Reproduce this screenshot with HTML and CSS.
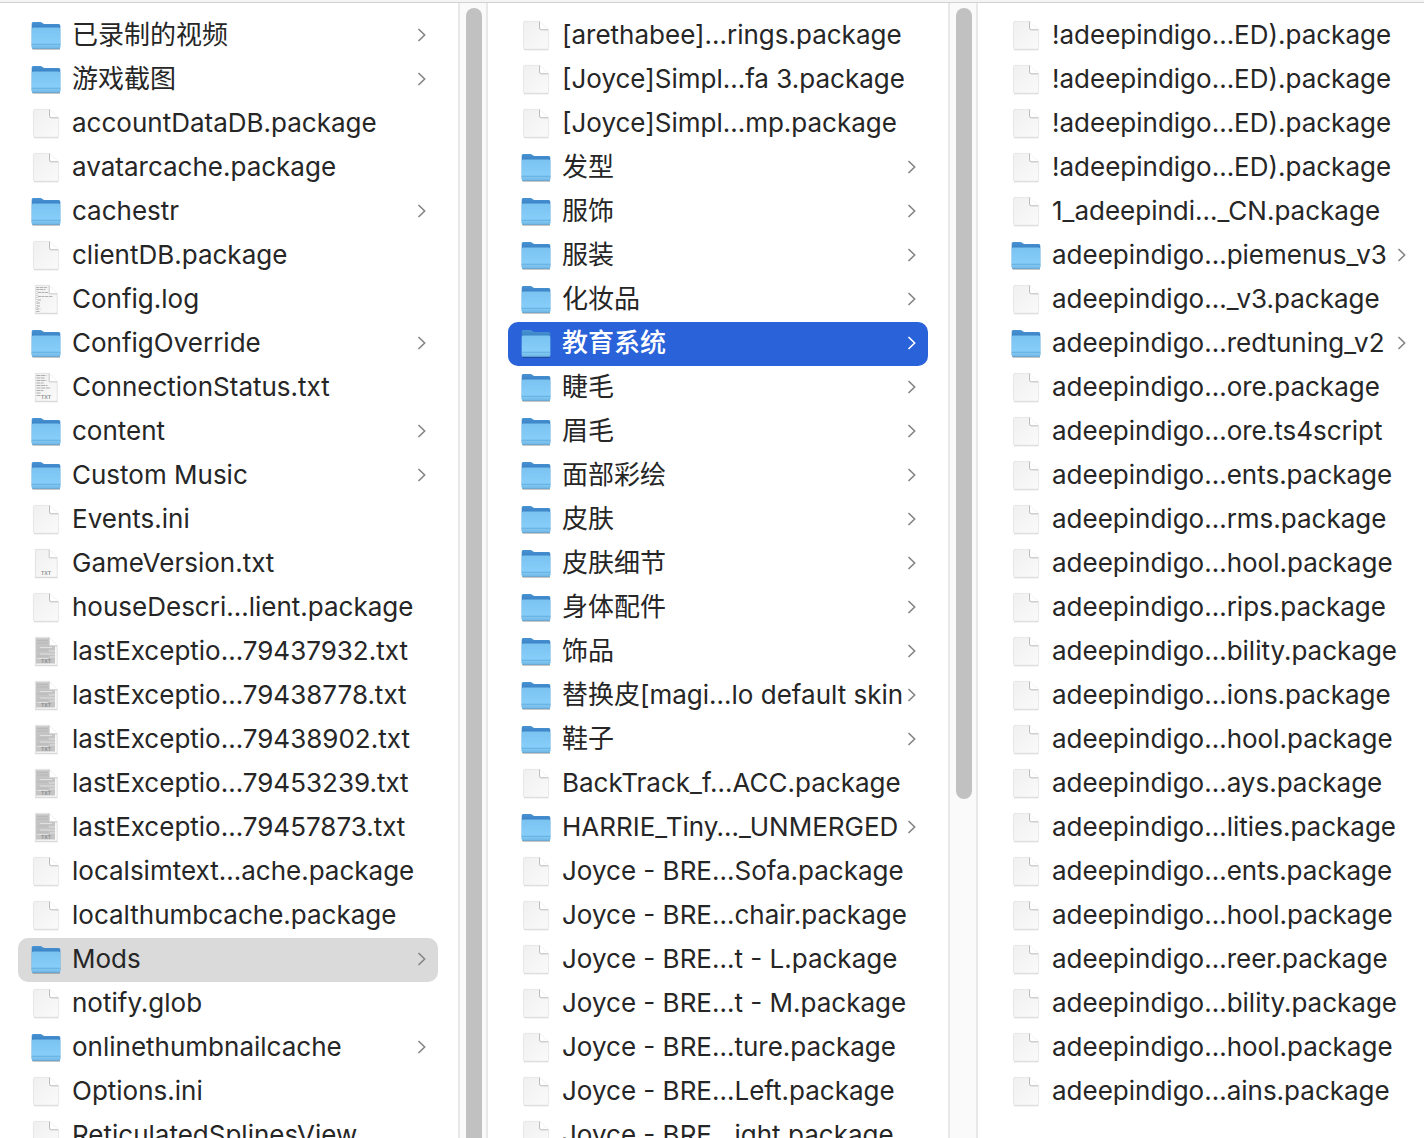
FILE: index.html
```
<!DOCTYPE html>
<html lang="zh-CN">
<head>
  <meta charset="UTF-8">
  <meta name="viewport" content="width=device-width, initial-scale=1.0">
  <title>Mods</title>
  <link rel="stylesheet" href="styles.css">
</head>
<body>
  <!-- icon set -->
  <svg class="sprite" width="0" height="0" aria-hidden="true">
    <defs>
      <linearGradient id="front" x1="0" y1="0" x2="0" y2="1">
        <stop offset="0" stop-color="#7ac2f0"/>
        <stop offset="0.7" stop-color="#86cdf9"/>
        <stop offset="1" stop-color="#74bbe9"/>
      </linearGradient>
      <linearGradient id="back" x1="0" y1="0" x2="0" y2="1">
        <stop offset="0" stop-color="#4893d3"/>
        <stop offset="0.25" stop-color="#3a82c4"/>
        <stop offset="1" stop-color="#3a82c4"/>
      </linearGradient>
      <linearGradient id="paper" x1="0" y1="0" x2="1" y2="1">
        <stop offset="0" stop-color="#f0f0f0"/>
        <stop offset="1" stop-color="#fafafa"/>
      </linearGradient>
    </defs>
    <symbol id="folder" viewBox="0 0 32 32">
      <path d="M2 28.5h28v1.5H3z" fill="#000" opacity=".22"/>
      <path d="M1.700 3.600q0-1.500 1.500-1.500h7.200q1 0 1.700.6l1 .8q.6.4 1.400.4h14.200q1.600 0 1.600 1.600V27H1.700z" fill="url(#back)"/>
      <path d="M1.700 9q0-1.600 1.600-1.600h25.400q1.600 0 1.600 1.600v18.200q0 1.600-1.600 1.600H3.300q-1.600 0-1.600-1.600z" fill="url(#front)"/>
      <path d="M1.700 24.300h28.600" stroke="#5fa9dc" stroke-width=".8"/>
      <path d="M2 28.400h28" stroke="#5d9dca" stroke-width=".8"/>
    </symbol>
    <symbol id="file" viewBox="0 0 32 32">
      <path d="M4 29.700h24.400" stroke="#000" stroke-width="1" opacity=".2"/>
      <path d="M5 1.400h14.600l9 8.600v17.500q0 1.800-1.800 1.800H5.200q-1.800 0-1.800-1.800V3.200q0-1.800 1.800-1.800z" fill="url(#paper)" stroke="#e0e0e0" stroke-width=".7"/>
      <path d="M28.300 9.800L19.500 1.500V8q0 1.800 1.800 1.800z" fill="#fff"/>
      <path d="M19.500 1.500V8q0 1.800 1.800 1.800h7" fill="none" stroke="#b4b4b4" stroke-width=".9"/>
    </symbol>
    <symbol id="sheet" viewBox="0 0 32 32">
      <path d="M5 29.700h22.500" stroke="#000" stroke-width="1" opacity=".2"/>
      <path d="M5.400 1.400h13.800l8 8.600v19.200H5.400z" fill="url(#paper)" stroke="#d8d8d8" stroke-width=".7"/>
      <path d="M19.200 1.500V9.800h8z" fill="#fff"/>
      <path d="M19.200 1.500V9.800h8" fill="none" stroke="#bcbcbc" stroke-width=".8"/>
    </symbol>
    <symbol id="log" viewBox="0 0 32 32">
      <use href="#sheet"/>
      <path d="M6.500 3.500h11M6.500 5.500h9M8 8.500h10M8 12.500h15M8 16h3M7 19h3M7 22h3M6.500 25h4M6.500 27.500h3" stroke="#b0b0b0" stroke-width="1" stroke-dasharray="3 .6"/>
      <path d="M7 3v25" stroke="#b5b5b5" stroke-width="1" stroke-dasharray="1 1"/>
    </symbol>
    <symbol id="txt-log" viewBox="0 0 32 32">
      <use href="#sheet"/>
      <path d="M6.500 3.500h10M6.500 6h8M6.500 8.500h10M6.500 11h7M6.500 13.500h11M6.500 16h14M6.500 18.500h7M6.500 21h4M6.500 23.500h4" stroke="#aeaeae" stroke-width="1" stroke-dasharray="4 .6"/>
      <text x="16" y="27" class="badge">TXT</text>
    </symbol>
    <symbol id="txt" viewBox="0 0 32 32">
      <use href="#sheet"/>
      <text x="16" y="27" class="badge">TXT</text>
    </symbol>
    <symbol id="report" viewBox="0 0 32 32">
      <use href="#sheet"/>
      <path d="M6 2.200h13v7.800h6v17.500H6z" fill="#c4c4c4"/>
      <path d="M10 11.500h12M19 15h6M10 18h15M20 21h5M7 22.500h11" stroke="#e0e0e0" stroke-width="1"/>
      <path d="M7 4.500h11M7 7h11M7 14h11M7 20h11" stroke="#b8b8b8" stroke-width=".8"/>
      <text x="16" y="27" class="badge">TXT</text>
    </symbol>
    <symbol id="arrow" viewBox="0 0 8 14">
      <path d="M1 1.500l5.700 5.500L1 12.500" fill="none" stroke="currentColor" stroke-width="1.700" stroke-linecap="round" stroke-linejoin="round"/>
    </symbol>
  </svg>

  <div class="toolbar-edge"></div>
  <main class="browser">
    <section class="column">
      <ul class="list">
        <li><button class="row"><svg class="icon"><use href="#folder"/></svg><span class="name">已录制的视频</span><svg class="arrow"><use href="#arrow"/></svg></button></li>
        <li><button class="row"><svg class="icon"><use href="#folder"/></svg><span class="name">游戏截图</span><svg class="arrow"><use href="#arrow"/></svg></button></li>
        <li><button class="row"><svg class="icon"><use href="#file"/></svg><span class="name">accountDataDB.package</span></button></li>
        <li><button class="row"><svg class="icon"><use href="#file"/></svg><span class="name">avatarcache.package</span></button></li>
        <li><button class="row"><svg class="icon"><use href="#folder"/></svg><span class="name">cachestr</span><svg class="arrow"><use href="#arrow"/></svg></button></li>
        <li><button class="row"><svg class="icon"><use href="#file"/></svg><span class="name">clientDB.package</span></button></li>
        <li><button class="row"><svg class="icon"><use href="#log"/></svg><span class="name">Config.log</span></button></li>
        <li><button class="row"><svg class="icon"><use href="#folder"/></svg><span class="name">ConfigOverride</span><svg class="arrow"><use href="#arrow"/></svg></button></li>
        <li><button class="row"><svg class="icon"><use href="#txt-log"/></svg><span class="name">ConnectionStatus.txt</span></button></li>
        <li><button class="row"><svg class="icon"><use href="#folder"/></svg><span class="name">content</span><svg class="arrow"><use href="#arrow"/></svg></button></li>
        <li><button class="row"><svg class="icon"><use href="#folder"/></svg><span class="name">Custom Music</span><svg class="arrow"><use href="#arrow"/></svg></button></li>
        <li><button class="row"><svg class="icon"><use href="#file"/></svg><span class="name">Events.ini</span></button></li>
        <li><button class="row"><svg class="icon"><use href="#txt"/></svg><span class="name">GameVersion.txt</span></button></li>
        <li><button class="row"><svg class="icon"><use href="#file"/></svg><span class="name">houseDescri…lient.package</span></button></li>
        <li><button class="row"><svg class="icon"><use href="#report"/></svg><span class="name">lastExceptio…79437932.txt</span></button></li>
        <li><button class="row"><svg class="icon"><use href="#report"/></svg><span class="name">lastExceptio…79438778.txt</span></button></li>
        <li><button class="row"><svg class="icon"><use href="#report"/></svg><span class="name">lastExceptio…79438902.txt</span></button></li>
        <li><button class="row"><svg class="icon"><use href="#report"/></svg><span class="name">lastExceptio…79453239.txt</span></button></li>
        <li><button class="row"><svg class="icon"><use href="#report"/></svg><span class="name">lastExceptio…79457873.txt</span></button></li>
        <li><button class="row"><svg class="icon"><use href="#file"/></svg><span class="name">localsimtext…ache.package</span></button></li>
        <li><button class="row"><svg class="icon"><use href="#file"/></svg><span class="name">localthumbcache.package</span></button></li>
        <li><button class="row open"><svg class="icon"><use href="#folder"/></svg><span class="name">Mods</span><svg class="arrow"><use href="#arrow"/></svg></button></li>
        <li><button class="row"><svg class="icon"><use href="#file"/></svg><span class="name">notify.glob</span></button></li>
        <li><button class="row"><svg class="icon"><use href="#folder"/></svg><span class="name">onlinethumbnailcache</span><svg class="arrow"><use href="#arrow"/></svg></button></li>
        <li><button class="row"><svg class="icon"><use href="#file"/></svg><span class="name">Options.ini</span></button></li>
        <li><button class="row"><svg class="icon"><use href="#file"/></svg><span class="name">ReticulatedSplinesView</span></button></li>
      </ul>
      <div class="scrollbar"><div class="thumb"></div></div>
    </section>

    <section class="column">
      <ul class="list">
        <li><button class="row"><svg class="icon"><use href="#file"/></svg><span class="name">[arethabee]…rings.package</span></button></li>
        <li><button class="row"><svg class="icon"><use href="#file"/></svg><span class="name">[Joyce]Simpl…fa 3.package</span></button></li>
        <li><button class="row"><svg class="icon"><use href="#file"/></svg><span class="name">[Joyce]Simpl…mp.package</span></button></li>
        <li><button class="row"><svg class="icon"><use href="#folder"/></svg><span class="name">发型</span><svg class="arrow"><use href="#arrow"/></svg></button></li>
        <li><button class="row"><svg class="icon"><use href="#folder"/></svg><span class="name">服饰</span><svg class="arrow"><use href="#arrow"/></svg></button></li>
        <li><button class="row"><svg class="icon"><use href="#folder"/></svg><span class="name">服装</span><svg class="arrow"><use href="#arrow"/></svg></button></li>
        <li><button class="row"><svg class="icon"><use href="#folder"/></svg><span class="name">化妆品</span><svg class="arrow"><use href="#arrow"/></svg></button></li>
        <li><button class="row selected"><svg class="icon"><use href="#folder"/></svg><span class="name">教育系统</span><svg class="arrow"><use href="#arrow"/></svg></button></li>
        <li><button class="row"><svg class="icon"><use href="#folder"/></svg><span class="name">睫毛</span><svg class="arrow"><use href="#arrow"/></svg></button></li>
        <li><button class="row"><svg class="icon"><use href="#folder"/></svg><span class="name">眉毛</span><svg class="arrow"><use href="#arrow"/></svg></button></li>
        <li><button class="row"><svg class="icon"><use href="#folder"/></svg><span class="name">面部彩绘</span><svg class="arrow"><use href="#arrow"/></svg></button></li>
        <li><button class="row"><svg class="icon"><use href="#folder"/></svg><span class="name">皮肤</span><svg class="arrow"><use href="#arrow"/></svg></button></li>
        <li><button class="row"><svg class="icon"><use href="#folder"/></svg><span class="name">皮肤细节</span><svg class="arrow"><use href="#arrow"/></svg></button></li>
        <li><button class="row"><svg class="icon"><use href="#folder"/></svg><span class="name">身体配件</span><svg class="arrow"><use href="#arrow"/></svg></button></li>
        <li><button class="row"><svg class="icon"><use href="#folder"/></svg><span class="name">饰品</span><svg class="arrow"><use href="#arrow"/></svg></button></li>
        <li><button class="row"><svg class="icon"><use href="#folder"/></svg><span class="name">替换皮[magi…lo default skin</span><svg class="arrow"><use href="#arrow"/></svg></button></li>
        <li><button class="row"><svg class="icon"><use href="#folder"/></svg><span class="name">鞋子</span><svg class="arrow"><use href="#arrow"/></svg></button></li>
        <li><button class="row"><svg class="icon"><use href="#file"/></svg><span class="name">BackTrack_f…ACC.package</span></button></li>
        <li><button class="row"><svg class="icon"><use href="#folder"/></svg><span class="name">HARRIE_Tiny…_UNMERGED</span><svg class="arrow"><use href="#arrow"/></svg></button></li>
        <li><button class="row"><svg class="icon"><use href="#file"/></svg><span class="name">Joyce - BRE…Sofa.package</span></button></li>
        <li><button class="row"><svg class="icon"><use href="#file"/></svg><span class="name">Joyce - BRE…chair.package</span></button></li>
        <li><button class="row"><svg class="icon"><use href="#file"/></svg><span class="name">Joyce - BRE…t - L.package</span></button></li>
        <li><button class="row"><svg class="icon"><use href="#file"/></svg><span class="name">Joyce - BRE…t - M.package</span></button></li>
        <li><button class="row"><svg class="icon"><use href="#file"/></svg><span class="name">Joyce - BRE…ture.package</span></button></li>
        <li><button class="row"><svg class="icon"><use href="#file"/></svg><span class="name">Joyce - BRE…Left.package</span></button></li>
        <li><button class="row"><svg class="icon"><use href="#file"/></svg><span class="name">Joyce - BRE…ight.package</span></button></li>
      </ul>
      <div class="scrollbar"><div class="thumb short"></div></div>
    </section>

    <section class="column last">
      <ul class="list">
        <li><button class="row"><svg class="icon"><use href="#file"/></svg><span class="name">!adeepindigo…ED).package</span></button></li>
        <li><button class="row"><svg class="icon"><use href="#file"/></svg><span class="name">!adeepindigo…ED).package</span></button></li>
        <li><button class="row"><svg class="icon"><use href="#file"/></svg><span class="name">!adeepindigo…ED).package</span></button></li>
        <li><button class="row"><svg class="icon"><use href="#file"/></svg><span class="name">!adeepindigo…ED).package</span></button></li>
        <li><button class="row"><svg class="icon"><use href="#file"/></svg><span class="name">1_adeepindi…_CN.package</span></button></li>
        <li><button class="row"><svg class="icon"><use href="#folder"/></svg><span class="name">adeepindigo…piemenus_v3</span><svg class="arrow"><use href="#arrow"/></svg></button></li>
        <li><button class="row"><svg class="icon"><use href="#file"/></svg><span class="name">adeepindigo…_v3.package</span></button></li>
        <li><button class="row"><svg class="icon"><use href="#folder"/></svg><span class="name">adeepindigo…redtuning_v2</span><svg class="arrow"><use href="#arrow"/></svg></button></li>
        <li><button class="row"><svg class="icon"><use href="#file"/></svg><span class="name">adeepindigo…ore.package</span></button></li>
        <li><button class="row"><svg class="icon"><use href="#file"/></svg><span class="name">adeepindigo…ore.ts4script</span></button></li>
        <li><button class="row"><svg class="icon"><use href="#file"/></svg><span class="name">adeepindigo…ents.package</span></button></li>
        <li><button class="row"><svg class="icon"><use href="#file"/></svg><span class="name">adeepindigo…rms.package</span></button></li>
        <li><button class="row"><svg class="icon"><use href="#file"/></svg><span class="name">adeepindigo…hool.package</span></button></li>
        <li><button class="row"><svg class="icon"><use href="#file"/></svg><span class="name">adeepindigo…rips.package</span></button></li>
        <li><button class="row"><svg class="icon"><use href="#file"/></svg><span class="name">adeepindigo…bility.package</span></button></li>
        <li><button class="row"><svg class="icon"><use href="#file"/></svg><span class="name">adeepindigo…ions.package</span></button></li>
        <li><button class="row"><svg class="icon"><use href="#file"/></svg><span class="name">adeepindigo…hool.package</span></button></li>
        <li><button class="row"><svg class="icon"><use href="#file"/></svg><span class="name">adeepindigo…ays.package</span></button></li>
        <li><button class="row"><svg class="icon"><use href="#file"/></svg><span class="name">adeepindigo…lities.package</span></button></li>
        <li><button class="row"><svg class="icon"><use href="#file"/></svg><span class="name">adeepindigo…ents.package</span></button></li>
        <li><button class="row"><svg class="icon"><use href="#file"/></svg><span class="name">adeepindigo…hool.package</span></button></li>
        <li><button class="row"><svg class="icon"><use href="#file"/></svg><span class="name">adeepindigo…reer.package</span></button></li>
        <li><button class="row"><svg class="icon"><use href="#file"/></svg><span class="name">adeepindigo…bility.package</span></button></li>
        <li><button class="row"><svg class="icon"><use href="#file"/></svg><span class="name">adeepindigo…hool.package</span></button></li>
        <li><button class="row"><svg class="icon"><use href="#file"/></svg><span class="name">adeepindigo…ains.package</span></button></li>
      </ul>
    </section>
  </main>
</body>
</html>
```

FILE: styles.css
```
*{
  margin: 0;
  padding: 0;
  box-sizing: border-box;
}
body{
  height: 100vh;
  display: flex;
  flex-direction: column;
  overflow: hidden;
  background-color: #fff;
  color: #262626;
  font-family: Inter, "Noto Sans CJK SC", sans-serif;
}
.sprite{
  position: absolute;
}
.badge{
  font-size: 5px;
  line-height: 5px;
  font-weight: 600;
  fill: #888;
  text-anchor: middle;
}
.toolbar-edge{
  height: 3px;
  flex-shrink: 0;
  background-color: #f4f4f4;
  border-bottom: 1px solid #d2d2d2;
}
.browser{
  flex: 1;
  min-height: 0;
  display: grid;
  grid-template-columns: 488fr 490fr 446fr;
}
.column{
  display: flex;
  min-width: 0;
  min-height: 0;
}
.list{
  flex: 1;
  min-width: 0;
  padding: 11px 20px 0;
  list-style: none;
  overflow: hidden;
}
.column:first-child .list{
  padding-left: 18px;
}
.last .list{
  padding-right: 6px;
}
.row{
  width: 100%;
  height: 44px;
  padding: 0 12px;
  display: flex;
  align-items: center;
  gap: 10px;
  border: none;
  border-radius: 10px;
  background: none;
  color: inherit;
  font-family: inherit;
  font-size: 26px;
  line-height: 32px;
  text-align: left;
}
.icon{
  width: 32px;
  height: 32px;
  flex-shrink: 0;
}
.name{
  flex: 1;
  min-width: 0;
  padding-bottom: 2px;
  white-space: nowrap;
}
.arrow{
  width: 8px;
  height: 14px;
  margin-bottom: 2px;
  flex-shrink: 0;
  color: #858585;
}
.open{
  background-color: #dadada;
}
.selected{
  background-color: #2962d9;
  color: #fff;
  font-weight: 500;
}
.selected .arrow{
  color: #fff;
}
.scrollbar{
  width: 30px;
  flex-shrink: 0;
  padding: 5px 4px 0 6px;
  background-color: #fafafa;
  border-left: 2px solid #e8e8e8;
  border-right: 2px solid #e8e8e8;
  overflow: hidden;
}
.thumb{
  width: 16px;
  height: 110%;
  border-radius: 8px;
  background-color: #c1c1c1;
}
.short{
  height: 70%;
}
```
